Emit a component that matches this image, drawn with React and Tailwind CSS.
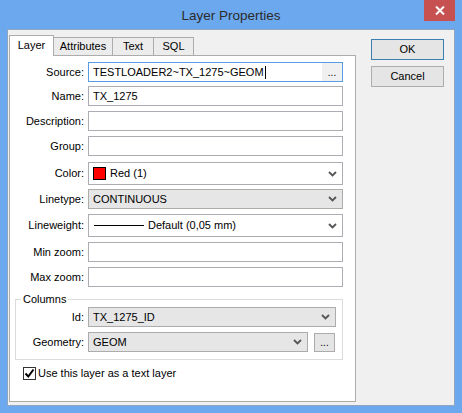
import React from 'react';

// Windows 8 style "Layer Properties" dialog

function Chevron() {
  return (
    <svg width="9" height="6" viewBox="0 0 9 6" className="shrink-0">
      <path d="M1 1l3.5 3.5L8 1" fill="none" stroke="#555" strokeWidth="1.8" />
    </svg>
  );
}

function TextBox({ children, focused, className = '' }) {
  return (
    <div
      className={`ml-[4px] flex h-[20px] w-[255px] items-center border bg-white pl-[4px] ${
        focused ? 'border-[#569de5]' : 'border-[#abadb3]'
      } ${className}`}
    >
      {children}
    </div>
  );
}

function Combo({ children, gray, w = 'w-[255px]', h = 'h-[20px]' }) {
  return (
    <div
      className={`ml-[4px] flex ${h} ${w} items-center justify-between border pl-[4px] pr-[5px] ${
        gray ? 'border-[#acacac] bg-[#e6e6e6]' : 'border-[#abadb3] bg-white'
      }`}
    >
      <div className="flex items-center">{children}</div>
      <Chevron />
    </div>
  );
}

function Row({ label, labelW = 'w-[74px]', mt, children }) {
  return (
    <div className={`flex items-center ${mt}`}>
      <div className={`${labelW} text-right`}>{label}</div>
      {children}
    </div>
  );
}

function Button({ children, primary }) {
  return (
    <div
      className={`flex h-[21px] w-[73px] items-center justify-center border bg-[#e5e5e5] ${
        primary ? 'border-[#3c7fb1]' : 'border-[#adadad]'
      }`}
    >
      {children}
    </div>
  );
}

export default function App() {
  return (
    <div className="flex h-[413px] w-[462px] flex-col bg-[#6ba8ee] px-[7px] pb-[7px] font-['Liberation_Sans',Arial,sans-serif] text-[11px] leading-[13px] text-black">
      {/* title bar */}
      <div className="grid h-[29px] grid-cols-[31px_1fr_31px] items-start">
        <div />
        <div className="pt-[8px] text-center text-[13.5px] leading-[16px] text-[#2b2b2b]">Layer Properties</div>
        <div className="flex h-[21px] items-center justify-center bg-[#c75050]">
          <svg width="10" height="9" viewBox="0 0 10 9">
            <path d="M1 0.5l8 8M9 0.5l-8 8" stroke="#fff" strokeWidth="2" />
          </svg>
        </div>
      </div>

      {/* client area */}
      <div className="flex flex-1 items-start border border-[#8fa6c2] bg-[#f0f0f0]">
        {/* tab control */}
        <div className="ml-[1px] mt-[5px] w-[347px]">
          <div className="flex h-[20px] items-end">
            <div className="relative z-10 -mb-px flex h-[21px] w-[45px] items-start justify-center border border-b-0 border-[#acacac] bg-white pt-[3px]">
              Layer
            </div>
            <div className="-ml-px flex h-[18px] w-[60px] items-center justify-center border border-b-0 border-[#acacac] bg-[#ececec]">
              Attributes
            </div>
            <div className="-ml-px flex h-[18px] w-[42px] items-center justify-center border border-b-0 border-[#acacac] bg-[#ececec]">
              Text
            </div>
            <div className="-ml-px flex h-[18px] w-[41px] items-center justify-center border border-b-0 border-[#acacac] bg-[#ececec]">
              SQL
            </div>
          </div>

          <div className="h-[347px] border border-[#acacac] bg-white pt-[6px]">
            <Row label="Source:">
              <TextBox focused className="justify-between pr-0">
                <div className="flex items-center">
                  TESTLOADER2~TX_1275~GEOM
                  <span className="ml-[1px] inline-block h-[13px] w-px bg-black" />
                </div>
                <div className="flex h-full w-[20px] items-end justify-center bg-[#f0f0f0] pb-[3px] text-[10px] leading-[10px]">
                  ...
                </div>
              </TextBox>
            </Row>
            <Row label="Name:" mt="mt-[4px]">
              <TextBox>TX_1275</TextBox>
            </Row>
            <Row label="Description:" mt="mt-[5px]">
              <TextBox />
            </Row>
            <Row label="Group:" mt="mt-[5px]">
              <TextBox />
            </Row>
            <Row label="Color:" mt="mt-[6px]">
              <Combo h="h-[23px]">
                <span className="mr-[4px] inline-block h-[13px] w-[13px] border border-black bg-[#ff0000]" />
                Red (1)
              </Combo>
            </Row>
            <Row label="Linetype:" mt="mt-[4px]">
              <Combo gray>CONTINUOUS</Combo>
            </Row>
            <Row label="Lineweight:" mt="mt-[5px]">
              <Combo h="h-[23px]">
                <span className="ml-[1px] mr-[4px] inline-block h-px w-[50px] bg-black" />
                Default (0,05 mm)
              </Combo>
            </Row>
            <Row label="Min zoom:" mt="mt-[5px]">
              <TextBox />
            </Row>
            <Row label="Max zoom:" mt="mt-[5px]">
              <TextBox />
            </Row>

            <fieldset className="ml-[5px] mt-[6px] w-[328px] border border-[#dcdcdc] pb-[7px]">
              <legend className="ml-[5px] px-[2px]">Columns</legend>
              <Row label="Id:" labelW="w-[68px]" mt="mt-[1px]">
                <Combo gray w="w-[248px]">TX_1275_ID</Combo>
              </Row>
              <Row label="Geometry:" labelW="w-[68px]" mt="mt-[5px]">
                <Combo gray w="w-[220px]">GEOM</Combo>
                <div className="ml-[6px] flex h-[19px] w-[21px] items-end justify-center border border-[#acacac] bg-[#e5e5e5] pb-[3px] text-[10px] leading-[10px]">
                  ...
                </div>
              </Row>
            </fieldset>

            <div className="ml-[13px] mt-[7px] flex items-center">
              <div className="flex h-[13px] w-[13px] items-center justify-center border border-[#333] bg-white">
                <svg width="11" height="11" viewBox="0 0 11 11">
                  <path d="M1.5 5.5l2.8 3L9.5 1.5" fill="none" stroke="#000" strokeWidth="2" />
                </svg>
              </div>
              <span className="ml-[2px]">Use this layer as a text layer</span>
            </div>
          </div>
        </div>

        {/* buttons */}
        <div className="ml-[15px] mt-[9px] flex flex-col gap-[6px]">
          <Button primary>OK</Button>
          <Button>Cancel</Button>
        </div>
      </div>
    </div>
  );
}
